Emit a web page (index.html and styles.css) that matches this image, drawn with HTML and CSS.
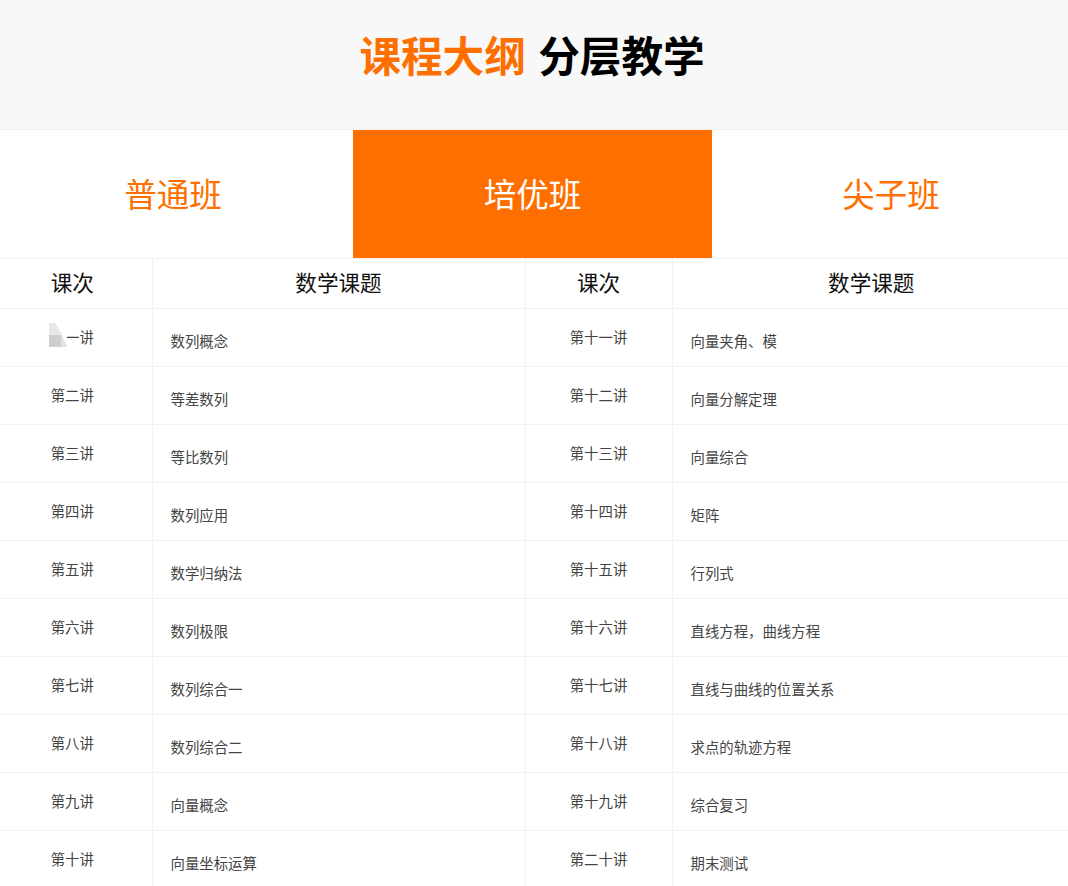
FILE: index.html
```html
<!DOCTYPE html>
<html lang="zh-CN">
<head>
<meta charset="utf-8">
<title>课程大纲 分层教学</title>
<link rel="stylesheet" href="styles.css">
</head>
<body>
<header class="hero">
  <h1 class="hero-title"><span class="accent">课程大纲</span> 分层教学</h1>
</header>
<nav class="tabs">
  <a class="tab">普通班</a>
  <a class="tab active">培优班</a>
  <a class="tab">尖子班</a>
</nav>
<table class="syllabus">
  <colgroup>
    <col class="c1"><col class="c2"><col class="c3"><col class="c4">
  </colgroup>
  <thead>
    <tr><th>课次</th><th>数学课题</th><th>课次</th><th>数学课题</th></tr>
  </thead>
  <tbody>
    <tr><td class="num"><span class="blot"></span>第一讲</td><td class="topic">数列概念</td><td class="num">第十一讲</td><td class="topic">向量夹角、模</td></tr>
    <tr><td class="num">第二讲</td><td class="topic">等差数列</td><td class="num">第十二讲</td><td class="topic">向量分解定理</td></tr>
    <tr><td class="num">第三讲</td><td class="topic">等比数列</td><td class="num">第十三讲</td><td class="topic">向量综合</td></tr>
    <tr><td class="num">第四讲</td><td class="topic">数列应用</td><td class="num">第十四讲</td><td class="topic">矩阵</td></tr>
    <tr><td class="num">第五讲</td><td class="topic">数学归纳法</td><td class="num">第十五讲</td><td class="topic">行列式</td></tr>
    <tr><td class="num">第六讲</td><td class="topic">数列极限</td><td class="num">第十六讲</td><td class="topic">直线方程，曲线方程</td></tr>
    <tr><td class="num">第七讲</td><td class="topic">数列综合一</td><td class="num">第十七讲</td><td class="topic">直线与曲线的位置关系</td></tr>
    <tr><td class="num">第八讲</td><td class="topic">数列综合二</td><td class="num">第十八讲</td><td class="topic">求点的轨迹方程</td></tr>
    <tr><td class="num">第九讲</td><td class="topic">向量概念</td><td class="num">第十九讲</td><td class="topic">综合复习</td></tr>
    <tr><td class="num">第十讲</td><td class="topic">向量坐标运算</td><td class="num">第二十讲</td><td class="topic">期末测试</td></tr>
  </tbody>
</table>
</body>
</html>
```
FILE: styles.css
```css
* { box-sizing: border-box; }
html, body { margin: 0; padding: 0; background: #fff; overflow: hidden; height: 886px; }
body { font-family: "Noto Sans CJK SC", "Noto Sans", sans-serif; color: #444; position: relative; }
.hero { height: 130px; background: #f8f8f8; border-bottom: 1px solid #f0f0f0; padding: 27px 4px 0 0; text-align: center; }
.hero-title { margin: 0; font-size: 41.6px; line-height: 54px; font-weight: 700; color: #000; word-spacing: 3px; }
.accent { color: #ff6f00; }
.tabs { display: grid; grid-template-columns: 353px 359px 356px; height: 128px; }
.tab { display: flex; align-items: center; justify-content: center; font-size: 32.6px; color: #ff6f00; padding-bottom: 4px; }
.tab:first-child { padding-right: 7px; }
.tab:last-child { padding-left: 2px; }
.tab.active { background: #ff6f00; color: #fff; }
.syllabus { width: 1068px; table-layout: fixed; border-collapse: collapse; }
.c1 { width: 152px; } .c2 { width: 373px; } .c3 { width: 147px; } .c4 { width: 396px; }
.syllabus th, .syllabus td { border: 1px solid #f2f2f2; padding: 0; }
.syllabus tr > :first-child { border-left: 0; padding-right: 7px; }
.syllabus tr > :last-child { border-right: 0; }
.syllabus th { height: 50px; font-size: 21.6px; font-weight: 400; color: #111; text-align: center; padding-bottom: 4px; }
.syllabus th:last-child { padding-left: 2px; }
.syllabus td { height: 58px; font-size: 14.4px; line-height: 20px; }
.syllabus td.num { text-align: center; vertical-align: middle; padding-bottom: 2px; }
.syllabus td.topic { padding: 6px 0 0 18px; }
.blot { position: absolute; left: 49px; top: 323px; width: 18px; height: 24px; background: #fff; }
.blot::before { content: ""; position: absolute; inset: 0;
  background: linear-gradient(#e9e8e7 0 12px, transparent 12px), linear-gradient(90deg, #cfcecc 0 12px, #e3e3e3 12px);
  clip-path: polygon(0 0, 6px 0, 13px 12px, 18px 24px, 0 24px); }
```
